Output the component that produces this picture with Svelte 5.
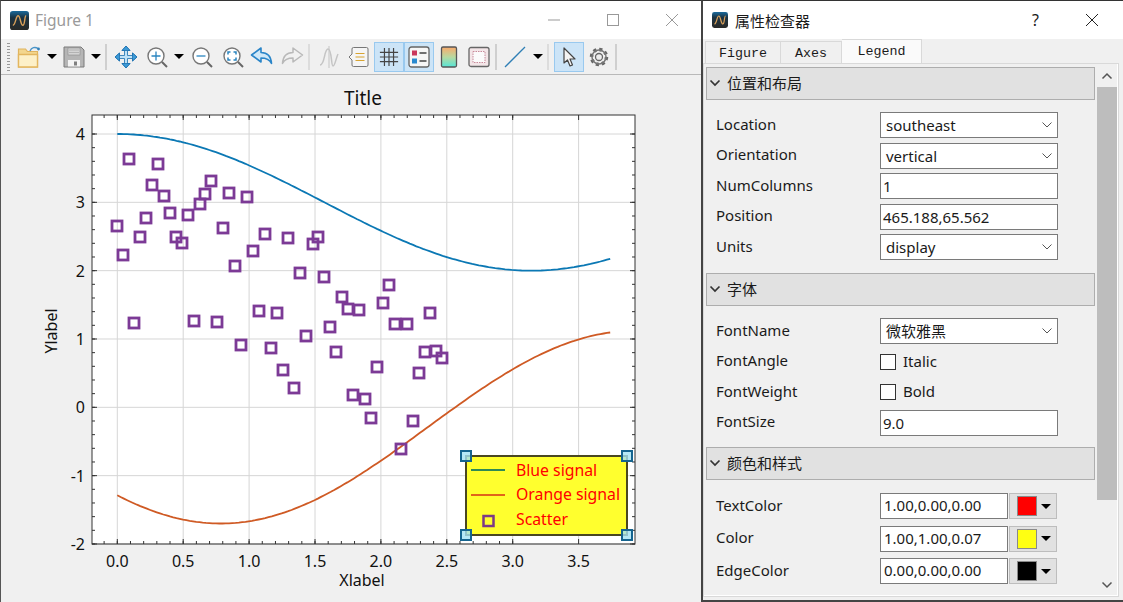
<script lang="ts">
  // axes mapping, in page pixels
  const px = (x: number) => 117.3 + x * 131.8;
  const py = (y: number) => 134 + (4 - y) * 68.33;
  const AX = { l: 92, r: 635, t: 115, b: 544 };

  const ts = Array.from({ length: 151 }, (_, i) => (i / 150) * 3.74);
  const toPath = (f: (t: number) => number) =>
    ts.map((t, i) => `${i ? "L" : "M"}${px(t).toFixed(1)} ${py(f(t)).toFixed(1)}`).join("");
  const bluePath = toPath((t) => 3 + Math.cos(t));
  const orangePath = toPath((t) => -0.29 + 1.41 * Math.sin(t - 2.356));

  const xMajor = [0, 0.5, 1, 1.5, 2, 2.5, 3, 3.5];
  const yMajor = [4, 3, 2, 1, 0, -1, -2];
  const xMinor = Array.from({ length: 32 }, (_, i) => -0.1 + i * 0.1).filter(
    (v) => px(v) > AX.l && px(v) < AX.r
  );
  const yMinor = Array.from({ length: 31 }, (_, i) => -2 + i * 0.2);

  const points = [
    [129, 159], [158, 164], [152, 185], [164, 196], [211, 181], [205, 194], [200, 204],
    [229, 193], [247, 197], [146, 218], [170, 213], [188, 215], [117, 226], [140, 237],
    [176, 237], [182, 243], [223, 228], [265, 234], [288, 238], [313, 244], [318, 237],
    [253, 251], [123, 255], [235, 266], [300, 273], [324, 277], [342, 297], [348, 309],
    [259, 311], [277, 313], [134, 323], [194, 321], [217, 322], [330, 327], [306, 336],
    [241, 345], [271, 348], [336, 352], [359, 310], [389, 285], [383, 303], [430, 313],
    [395, 324], [407, 324], [425, 352], [436, 351], [442, 358], [377, 367], [419, 373],
    [283, 370], [294, 388], [353, 395], [365, 399], [371, 418], [413, 421], [401, 449]
  ];

  const handles = [[466, 456], [627, 456], [466, 535], [627, 535]];
</script>

{#snippet appIcon(size)}
  <svg width={size} height={size} viewBox="0 0 20 20">
    <defs>
      <linearGradient id="ico" x1="0" y1="0" x2="0" y2="1">
        <stop offset="0" stop-color="#1a6a9c" />
        <stop offset="0.35" stop-color="#1c3342" />
        <stop offset="1" stop-color="#2a2a28" />
      </linearGradient>
    </defs>
    <rect width="20" height="20" rx="3" fill="url(#ico)" />
    <path d="M3 15C6 15 6 5 8.500 5S11 15 13.500 15 15 5 17 5" fill="none" stroke="#d9a05a" stroke-width="1.500" />
  </svg>
{/snippet}

{#snippet chevron()}
  <svg class="chev" width="12" height="8" viewBox="0 0 12 8">
    <path d="M1.500 1.500 6 6l4.500-4.500" fill="none" stroke="#555" stroke-width="1" />
  </svg>
{/snippet}

{#snippet sectionHead(label)}
  <div class="head">
    <svg width="12" height="8" viewBox="0 0 12 8">
      <path d="M1.500 1.500 6 6l4.500-4.500" fill="none" stroke="#333" stroke-width="1.700" />
    </svg>
    <span>{label}</span>
  </div>
{/snippet}

{#snippet colorRow(label, value, color)}
  <div class="row">
    <span class="lab">{label}</span>
    <div class="input color-input">{value}</div>
    <div class="colorbtn">
      <span class="swatch" style="background:{color}"></span>
      <span class="caret"></span>
    </div>
  </div>
{/snippet}

<div class="screen">
  <section class="figure">
    <header class="titlebar">
      {@render appIcon(19)}
      <span class="figtitle">Figure 1</span>
      <div class="winbtns">
        <svg width="14" height="14" viewBox="0 0 14 14"><path d="M1 7h12" stroke="#999" /></svg>
        <svg width="14" height="14" viewBox="0 0 14 14"><rect x="1.500" y="1.500" width="11" height="11" fill="none" stroke="#999" /></svg>
        <svg width="14" height="14" viewBox="0 0 14 14"><path d="M1 1l12 12M13 1 1 13" stroke="#999" /></svg>
      </div>
    </header>

    <nav class="toolbar">
      <span class="grip"></span>
      <button class="tool" aria-label="open">
        <svg width="26" height="26" viewBox="0 0 26 26">
          <path d="M2.500 5h7l2 2.500h10V23h-19z" fill="#f3d68e" stroke="#e0b45e" stroke-width="1.200" />
          <path d="M2.500 10.500h19V23h-19z" fill="#fdf0c8" stroke="#e3b65f" stroke-width="1.400" />
          <path d="M14 7c1.500-3.500 5-4.500 8-2.500" fill="none" stroke="#4a94c8" stroke-width="1.400" />
          <circle cx="22.500" cy="5" r="1.400" fill="#2f7fb8" />
        </svg>
      </button>
      <button class="drop" aria-label="menu"><span class="caret"></span></button>
      <button class="tool narrow" aria-label="save">
        <svg width="24" height="24" viewBox="0 0 24 24">
          <path d="M2 2h17l3 3v17H2z" fill="#b5b5b5" stroke="#7a7a7a" />
          <rect x="6" y="3" width="12" height="7" fill="#d4d4d4" stroke="#8a8a8a" stroke-width="0.600" />
          <path d="M7 5h10M7 7.500h10" stroke="#a5a5a5" stroke-width="0.700" />
          <rect x="6" y="15" width="12" height="6.500" fill="#f4f4f4" />
          <rect x="12" y="16.500" width="3" height="4" fill="#808080" />
        </svg>
      </button>
      <button class="drop" aria-label="menu"><span class="caret"></span></button>
      <span class="sep"></span>
      <button class="tool first" aria-label="pan">
        <svg width="24" height="24" viewBox="0 0 24 24" fill="#3d9ad6" stroke="#1a6fae" stroke-width="0.800">
          <path d="M12 1l4 4.500h-2.500v5h5V8l4.500 4-4.500 4v-2.500h-5v5H16L12 23l-4-4.500h2.500v-5h-5V16L1 12l4.500-4v2.500h5v-5H8z" fill="#bfe2f7" />
          <path d="M12 1l4 4.500H8zM12 23l-4-4.500h8zM1 12l4.500-4v8zM23 12l-4.500 4V8z" />
        </svg>
      </button>
      <button class="tool" aria-label="zoom in">
        <svg width="24" height="24" viewBox="0 0 24 24">
          <circle cx="12" cy="11" r="8" fill="#fff" stroke="#777" stroke-width="1.400" />
          <path d="M12 6.500v9M7.500 11h9" stroke="#2a85c0" stroke-width="1.300" />
          <path d="M18 17l5 5" stroke="#666" stroke-width="2" />
        </svg>
      </button>
      <button class="drop" aria-label="menu"><span class="caret"></span></button>
      <button class="tool" aria-label="zoom out">
        <svg width="24" height="24" viewBox="0 0 24 24">
          <circle cx="11" cy="11" r="8" fill="#fff" stroke="#777" stroke-width="1.400" />
          <path d="M6.500 11h9" stroke="#2a85c0" stroke-width="1.300" />
          <path d="M17 17l5 5" stroke="#666" stroke-width="2" />
        </svg>
      </button>
      <button class="tool" aria-label="zoom fit">
        <svg width="24" height="24" viewBox="0 0 24 24">
          <circle cx="12" cy="11" r="8" fill="#fff" stroke="#777" stroke-width="1.400" />
          <path d="M8 9.500V7h2.500M13.500 7H16v2.500M16 12.500V15h-2.500M10.500 15H8v-2.500" fill="none" stroke="#2a85c0" stroke-width="1.500" />
          <path d="M18 17l5 5" stroke="#666" stroke-width="2" />
        </svg>
      </button>
      <button class="tool" aria-label="undo">
        <svg width="24" height="24" viewBox="0 0 24 24">
          <path d="M1.500 10 11 3v4.500c6 0 10 3.500 10.500 11-2-4-5-5.500-10.500-5.500V17z" fill="#cfe8f8" stroke="#2a85c8" stroke-width="1.600" stroke-linejoin="round" />
        </svg>
      </button>
      <button class="tool" aria-label="redo">
        <svg width="24" height="24" viewBox="0 0 24 24">
          <path d="M22.500 10 13 3v4.500c-6 0-10 3.500-10.500 11 2-4 5-5.500 10.500-5.500V17z" fill="#f1f1f1" stroke="#b9b9b9" stroke-width="1.500" stroke-linejoin="round" />
        </svg>
      </button>
      <span class="sep pale"></span>
      <button class="tool first" aria-label="curve">
        <svg width="24" height="24" viewBox="0 0 24 24" fill="none" stroke="#c4c4c4" stroke-width="1.500">
          <path d="M3 20C8 20 7 4 11 4s3 17 5 17 3-8 5-12" />
          <path d="M12 1v22" stroke-width="1" />
        </svg>
      </button>
      <button class="tool" aria-label="legend box">
        <svg width="24" height="24" viewBox="0 0 24 24">
          <path d="M2 12l3-3V4a1.500 1.500 0 0 1 1.500-1.500h13A1.500 1.500 0 0 1 21 4v16a1.500 1.500 0 0 1-1.500 1.500h-13A1.500 1.500 0 0 1 5 20v-5z" fill="#f5f5f5" stroke="#777" />
          <path d="M8.500 8.500h9M8.500 12h9M8.500 15.500h9" stroke="#d8a431" stroke-width="1.200" />
        </svg>
      </button>
      <button class="tool on" aria-label="grid">
        <svg width="20" height="20" viewBox="0 0 22 22">
          <path d="M6 1v20M11 1v20M16 1v20M1 6h20M1 11h20M1 16h20" stroke="#444" stroke-width="1.300" />
        </svg>
      </button>
      <button class="tool on" aria-label="legend">
        <svg width="24" height="24" viewBox="0 0 24 24">
          <rect x="2" y="2" width="20" height="20" rx="2.500" fill="#f6f6f6" stroke="#666" stroke-width="1.300" />
          <rect x="5" y="5.500" width="5" height="5" fill="#c9375c" />
          <rect x="5" y="13.500" width="5" height="5" fill="#2a8ad0" />
          <path d="M12.500 8h7M12.500 16h7" stroke="#444" stroke-width="1.300" />
        </svg>
      </button>
      <button class="tool" aria-label="colorbar">
        <svg width="22" height="24" viewBox="0 0 22 24">
          <defs>
            <linearGradient id="cbar" x1="0" y1="0" x2="0" y2="1">
              <stop offset="0" stop-color="#fba96a" />
              <stop offset="0.5" stop-color="#b8d9a0" />
              <stop offset="1" stop-color="#55e6d8" />
            </linearGradient>
          </defs>
          <rect x="3.500" y="2" width="15" height="20" rx="1.500" fill="url(#cbar)" stroke="#555" stroke-width="1.300" />
        </svg>
      </button>
      <button class="tool" aria-label="axes frame">
        <svg width="24" height="24" viewBox="0 0 24 24">
          <rect x="2" y="2.500" width="20" height="19" rx="2" fill="#f3e6e8" stroke="#666" stroke-width="1.300" />
          <rect x="6" y="6.500" width="12" height="11" fill="#fbfbfb" stroke="#c88a9a" stroke-dasharray="1.500 1" />
        </svg>
      </button>
      <span class="sep"></span>
      <button class="tool first-sm" aria-label="line">
        <svg width="24" height="24" viewBox="0 0 24 24"><path d="M2 22 22 2" stroke="#2f7fb5" stroke-width="1.300" /></svg>
      </button>
      <button class="drop" aria-label="menu"><span class="caret"></span></button>
      <span class="sep pale short"></span>
      <button class="tool on cursor" aria-label="select">
        <svg width="20" height="22" viewBox="0 0 20 22">
          <path d="M5 2v15l3.500-3 2.500 6 2.500-1-2.500-6H16z" fill="#f4f4f4" stroke="#444" stroke-width="1.200" stroke-linejoin="round" />
        </svg>
      </button>
      <button class="tool" aria-label="settings">
        <svg width="24" height="24" viewBox="0 0 24 24" fill="none">
          <circle cx="12" cy="12" r="7.500" stroke="#666" stroke-width="3.500" stroke-dasharray="3 2.890" />
          <circle cx="12" cy="12" r="7" stroke="#777" stroke-width="1.500" />
          <circle cx="12" cy="12" r="3.500" fill="#eee" stroke="#666" stroke-width="1.300" />
        </svg>
      </button>
      <span class="sep"></span>
    </nav>

    <svg class="plot" width="700" height="527" viewBox="1 75 700 527">
      <rect x={AX.l} y={AX.t} width={AX.r - AX.l} height={AX.b - AX.t} fill="#fff" />
      {#each xMajor as v}
        <line x1={px(v)} x2={px(v)} y1={AX.t} y2={AX.b} stroke="#d6d6d6" />
      {/each}
      {#each yMajor as v}
        <line x1={AX.l} x2={AX.r} y1={py(v)} y2={py(v)} stroke="#d6d6d6" />
      {/each}
      {#each xMinor as v}
        <path d="M{px(v)} {AX.t}v3M{px(v)} {AX.b}v-3" stroke="#333" />
      {/each}
      {#each yMinor as v}
        <path d="M{AX.l} {py(v)}h3M{AX.r} {py(v)}h-3" stroke="#333" />
      {/each}
      {#each xMajor as v}
        <path d="M{px(v)} {AX.t}v5M{px(v)} {AX.b}v-5" stroke="#333" />
        <text x={px(v)} y="567" text-anchor="middle" class="tick">{v.toFixed(1)}</text>
      {/each}
      {#each yMajor as v}
        <path d="M{AX.l} {py(v)}h5M{AX.r} {py(v)}h-5" stroke="#333" />
        <text x="85" y={py(v) + 6} text-anchor="end" class="tick">{v}</text>
      {/each}

      <path d={bluePath} fill="none" stroke="#0b78b4" stroke-width="1.800" />
      <path d={orangePath} fill="none" stroke="#cf5a24" stroke-width="1.800" />
      {#each points as [x, y]}
        <rect x={x - 5} y={y - 5} width="10" height="10" fill="none" stroke="#7c3a96" stroke-width="2.800" />
      {/each}
      <rect x={AX.l} y={AX.t} width={AX.r - AX.l} height={AX.b - AX.t} fill="none" stroke="#333" />

      <text x="363" y="105" text-anchor="middle" class="ptitle">Title</text>
      <text x="362" y="586" text-anchor="middle" class="axlabel">Xlabel</text>
      <text transform="translate(57 331) rotate(-90)" text-anchor="middle" class="axlabel">Ylabel</text>

      <rect x="466" y="456" width="161" height="79" fill="#ffff2e" stroke="#4a4720" stroke-width="2" />
      <line x1="471" x2="505" y1="470" y2="470" stroke="#2f8a55" stroke-width="1.800" />
      <line x1="471" x2="505" y1="495" y2="495" stroke="#e0641a" stroke-width="1.800" />
      <rect x="483.500" y="516" width="10" height="10" fill="#ffff2e" stroke="#7c3a86" stroke-width="2.500" />
      <text x="516" y="476" class="legtext">Blue signal</text>
      <text x="516" y="500" class="legtext">Orange signal</text>
      <text x="516" y="525" class="legtext">Scatter</text>
      {#each handles as [x, y]}
        <rect x={x - 5} y={y - 5} width="10" height="10" fill="#a4e2f4" fill-opacity="0.800" stroke="#15648f" stroke-width="2" />
      {/each}
    </svg>
  </section>

  <section class="inspector">
    <header class="titlebar insp-title">
      {@render appIcon(16)}
      <span class="insp-name">属性检查器</span>
      <span class="help">?</span>
      <svg class="insp-close" width="14" height="14" viewBox="0 0 14 14"><path d="M1 1l12 12M13 1 1 13" stroke="#222" /></svg>
    </header>

    <div class="tabs">
      <span class="tab t1">Figure</span>
      <span class="tab t2">Axes</span>
      <span class="tab active">Legend</span>
    </div>

    <div class="panel">
      <div class="content">
        {@render sectionHead("位置和布局")}
        <div class="fields f1">
          <div class="row"><span class="lab">Location</span><div class="input combo">southeast{@render chevron()}</div></div>
          <div class="row"><span class="lab">Orientation</span><div class="input combo">vertical{@render chevron()}</div></div>
          <div class="row"><span class="lab">NumColumns</span><div class="input">1</div></div>
          <div class="row"><span class="lab">Position</span><div class="input">465.188,65.562</div></div>
          <div class="row"><span class="lab">Units</span><div class="input combo">display{@render chevron()}</div></div>
        </div>

        {@render sectionHead("字体")}
        <div class="fields f2">
          <div class="row"><span class="lab">FontName</span><div class="input combo">微软雅黑{@render chevron()}</div></div>
          <div class="row"><span class="lab">FontAngle</span><span class="check"></span><span class="checklab">Italic</span></div>
          <div class="row"><span class="lab">FontWeight</span><span class="check"></span><span class="checklab">Bold</span></div>
          <div class="row"><span class="lab">FontSize</span><div class="input">9.0</div></div>
        </div>

        {@render sectionHead("颜色和样式")}
        <div class="fields f3">
          {@render colorRow("TextColor", "1.00,0.00,0.00", "#ff0000")}
          {@render colorRow("Color", "1.00,1.00,0.07", "#ffff12")}
          {@render colorRow("EdgeColor", "0.00,0.00,0.00", "#000000")}
          <div class="row"><span class="lab"></span><span class="check"></span></div>
        </div>
      </div>

      <div class="scrollbar">
        <svg width="12" height="8" viewBox="0 0 12 8"><path d="M1.500 6.500 6 2l4.500 4.500" fill="none" stroke="#555" stroke-width="1.500" /></svg>
        <div class="thumb"></div>
        <svg class="sb-down" width="12" height="8" viewBox="0 0 12 8"><path d="M1.500 1.500 6 6l4.500-4.500" fill="none" stroke="#555" stroke-width="1.500" /></svg>
      </div>
    </div>
  </section>
</div>

<style>
  :global(body) {
    margin: 0;
    background: #f0f0f0;
  }

  .screen {
    display: flex;
    width: 1123px;
    height: 602px;
    overflow: hidden;
    font-family: "Noto Sans", "Noto Sans CJK SC", sans-serif;
    font-size: 15px;
    color: #1a1a1a;
  }

  .figure {
    width: 700px;
    flex: none;
    box-sizing: content-box;
    border-top: 1px solid #333;
    border-left: 1px solid #555;
    background: #f0f0f0;
  }

  .titlebar {
    display: flex;
    align-items: center;
    height: 38px;
    background: #fff;
  }

  .figure .titlebar {
    padding-left: 9px;
  }

  .figtitle {
    margin-left: 6px;
    font-size: 15.500px;
    color: #9a9a9a;
  }

  .winbtns {
    display: flex;
    gap: 45px;
    margin-left: auto;
    margin-right: 22px;
  }

  .toolbar {
    display: flex;
    align-items: center;
    height: 35px;
    border-bottom: 1px solid #b9b9b9;
    padding-left: 6px;
  }

  .grip {
    width: 3px;
    height: 28px;
    margin-right: 4px;
    background: repeating-linear-gradient(to bottom, #999 0 1px, transparent 1px 3px);
  }

  .tool {
    display: flex;
    align-items: center;
    justify-content: center;
    flex: none;
    width: 30px;
    height: 30px;
    padding: 0;
    box-sizing: border-box;
    border: 1px solid transparent;
    background: none;
  }

  .tool.narrow {
    width: 28px;
  }

  .tool.first {
    margin-left: 3px;
  }

  .tool.first-sm {
    margin-left: 2px;
  }

  .tool.on {
    background: #cce4f7;
    border-color: #99c9ef;
  }

  .tool.cursor {
    margin-left: 4px;
  }

  .drop {
    display: flex;
    align-items: center;
    justify-content: center;
    flex: none;
    width: 16px;
    height: 30px;
    padding: 0;
    border: none;
    background: none;
  }

  .caret {
    width: 0;
    height: 0;
    border-left: 5px solid transparent;
    border-right: 5px solid transparent;
    border-top: 5px solid #000;
  }

  .sep {
    flex: none;
    width: 2px;
    height: 26px;
    margin: 0 1px;
    background: #cfcfcf;
  }

  .sep.pale {
    background: #dcdcdc;
  }

  .plot {
    display: block;
  }

  .tick {
    font-size: 16px;
    fill: #111;
  }

  .ptitle {
    font-size: 19px;
    fill: #111;
  }

  .axlabel {
    font-size: 16px;
    fill: #111;
  }

  .legtext {
    font-size: 15.800px;
    fill: #f00;
  }

  .inspector {
    flex: 1;
    min-width: 0;
    border-top: 1px solid #333;
    border-left: 2px solid #444;
    border-bottom: 2px solid #444;
    background: #f0f0f0;
  }

  .insp-title {
    padding-left: 9px;
  }

  .insp-name {
    margin-left: 7px;
    font-size: 15px;
  }

  .help {
    margin-left: auto;
    font-size: 16px;
  }

  .insp-close {
    margin-left: 46px;
    margin-right: 24px;
  }

  .tabs {
    display: flex;
    align-items: flex-end;
    height: 24px;
    padding-left: 2px;
  }

  .tab {
    box-sizing: border-box;
    height: 22px;
    padding-top: 3px;
    text-align: center;
    border: 1px solid #d9d9d9;
    border-bottom: none;
    background: #f0f0f0;
    font-family: "Liberation Mono", monospace;
    font-size: 13.330px;
    line-height: 18px;
  }

  .t1 {
    width: 76px;
  }

  .t2 {
    width: 61px;
    border-left: none;
  }

  .active {
    width: 80px;
    height: 24px;
    padding-top: 3px;
    background: #fafafa;
    border-left: none;
  }

  .panel {
    display: flex;
    box-sizing: border-box;
    width: 416px;
    height: 534px;
    padding: 3px 1px 0 2px;
    border: 1px solid #d9d9d9;
    box-shadow: inset -1px -1px 0 #fff;
    overflow: hidden;
  }

  .content {
    width: 389px;
    flex: none;
  }

  .head {
    display: flex;
    align-items: center;
    gap: 6px;
    box-sizing: border-box;
    height: 33px;
    padding: 0 0 2px 2px;
    border: 1px solid #adadad;
    background: #e1e1e1;
    font-size: 15px;
  }

  .fields {
    display: flex;
    flex-direction: column;
  }

  .f1 {
    gap: 4.500px;
    padding: 12px 0 13px 10px;
  }

  .f2 {
    gap: 4.500px;
    padding: 12px 0 11.500px 10px;
  }

  .f3 {
    gap: 6.500px;
    padding: 13px 0 0 10px;
  }

  .row {
    display: flex;
    align-items: center;
    height: 26px;
  }

  .lab {
    width: 164px;
    flex: none;
    padding-bottom: 3px;
  }

  .input {
    position: relative;
    box-sizing: border-box;
    width: 178px;
    height: 26px;
    padding-left: 2px;
    border: 1px solid #7a7a7a;
    background: #fff;
    line-height: 24px;
    white-space: nowrap;
  }

  .combo {
    padding-left: 5px;
  }

  .chev {
    position: absolute;
    right: 4px;
    top: 8px;
  }

  .color-input {
    width: 128px;
    padding-left: 3px;
    line-height: 23px;
  }

  .colorbtn {
    display: flex;
    align-items: center;
    gap: 4px;
    box-sizing: border-box;
    width: 48px;
    height: 26px;
    margin-left: 1px;
    padding-left: 7px;
    border: 1px solid #bdbdbd;
    background: #e1e1e1;
  }

  .swatch {
    box-sizing: border-box;
    width: 20px;
    height: 20px;
    border: 1px solid #8a8a8a;
  }

  .check {
    box-sizing: border-box;
    width: 16px;
    height: 16px;
    border: 1px solid #333;
    background: #fff;
  }

  .checklab {
    margin-left: 7px;
    padding-bottom: 2px;
  }

  .scrollbar {
    position: relative;
    display: flex;
    flex-direction: column;
    align-items: center;
    width: 20px;
    margin-left: 2px;
    padding-top: 5px;
  }

  .thumb {
    width: 100%;
    height: 413px;
    margin-top: 7px;
    background: #bdbdbd;
  }

  .sb-down {
    position: absolute;
    top: 514px;
  }
</style>
